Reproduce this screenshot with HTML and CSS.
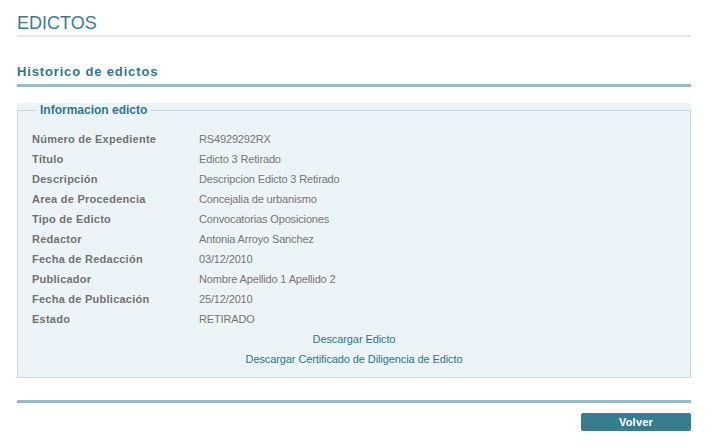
FILE: index.html
```html
<!DOCTYPE html>
<html lang="es">
<head>
<meta charset="utf-8">
<title>Edictos</title>
<link rel="stylesheet" href="styles.css">
</head>
<body>
<div class="page">
  <h1 class="page-title">EDICTOS</h1>
  <h2 class="section-title">Historico de edictos</h2>
  <div class="panel">
    <fieldset class="info">
      <legend class="info-legend">Informacion edicto</legend>
      <div class="rows">
        <div class="row"><span class="label">Número de Expediente</span><span class="value">RS4929292RX</span></div>
        <div class="row"><span class="label">Título</span><span class="value">Edicto 3 Retirado</span></div>
        <div class="row"><span class="label">Descripción</span><span class="value">Descripcion Edicto 3 Retirado</span></div>
        <div class="row"><span class="label">Area de Procedencia</span><span class="value">Concejalia de urbanismo</span></div>
        <div class="row"><span class="label">Tipo de Edicto</span><span class="value">Convocatorias Oposiciones</span></div>
        <div class="row"><span class="label">Redactor</span><span class="value">Antonia Arroyo Sanchez</span></div>
        <div class="row"><span class="label">Fecha de Redacción</span><span class="value">03/12/2010</span></div>
        <div class="row"><span class="label">Publicador</span><span class="value">Nombre Apellido 1 Apellido 2</span></div>
        <div class="row"><span class="label">Fecha de Publicación</span><span class="value">25/12/2010</span></div>
        <div class="row"><span class="label">Estado</span><span class="value">RETIRADO</span></div>
      </div>
      <div class="links">
        <a class="link" href="#">Descargar Edicto</a>
        <a class="link" href="#">Descargar Certificado de Diligencia de Edicto</a>
      </div>
    </fieldset>
  </div>
  <div class="footer">
    <button class="btn" type="button">Volver</button>
  </div>
</div>
</body>
</html>
```

FILE: styles.css
```css
html, body {
  margin: 0;
  padding: 0;
  background: #ffffff;
}

body {
  font-family: "Liberation Sans", Arial, sans-serif;
}

.page {
  width: 674px;
  margin-left: 17px;
  padding-top: 12px;
}

.page-title {
  margin: 0;
  font-size: 18px;
  line-height: 22px;
  font-weight: normal;
  color: #3b7c91;
  height: 23px;
  border-bottom: 2px solid #e4e4e4;
}

.section-title {
  margin: 27px 0 0 0;
  font-size: 13px;
  line-height: 16px;
  font-weight: bold;
  letter-spacing: 0.85px;
  color: #34778c;
  padding-bottom: 4px;
  border-bottom: 3px solid #98bcc8;
}

.panel {
  margin-top: 16px;
  background: #ecf4f7;
}

.info {
  margin: 0;
  padding: 12px 14px 8px 14px;
  border: 1px solid #cdd8dc;
  min-width: 0;
}

.info-legend {
  margin-left: 4px;
  padding: 0 4px;
  font-size: 12px;
  line-height: 14px;
  font-weight: bold;
  color: #34778c;
}

.rows {
  display: flex;
  flex-direction: column;
}

.row {
  display: flex;
  font-size: 11px;
  line-height: 20px;
  height: 20px;
}

.label {
  width: 167px;
  flex: none;
  font-weight: bold;
  letter-spacing: 0.25px;
  color: #727272;
}

.value {
  color: #767676;
  letter-spacing: -0.15px;
}

.links {
  display: flex;
  flex-direction: column;
  align-items: center;
}

.link {
  font-size: 11px;
  line-height: 20px;
  color: #2f7489;
  text-decoration: none;
  letter-spacing: -0.1px;
}

.footer {
  margin-top: 22px;
  border-top: 3px solid #98bcc8;
  padding-top: 10px;
  display: flex;
  justify-content: flex-end;
}

.btn {
  width: 110px;
  height: 18px;
  margin: 0;
  padding: 0;
  border: none;
  border-radius: 2px;
  background: #377c90;
  color: #ffffff;
  font-family: "Liberation Sans", Arial, sans-serif;
  font-size: 11px;
  font-weight: bold;
  letter-spacing: 0.2px;
  line-height: 18px;
}
```
